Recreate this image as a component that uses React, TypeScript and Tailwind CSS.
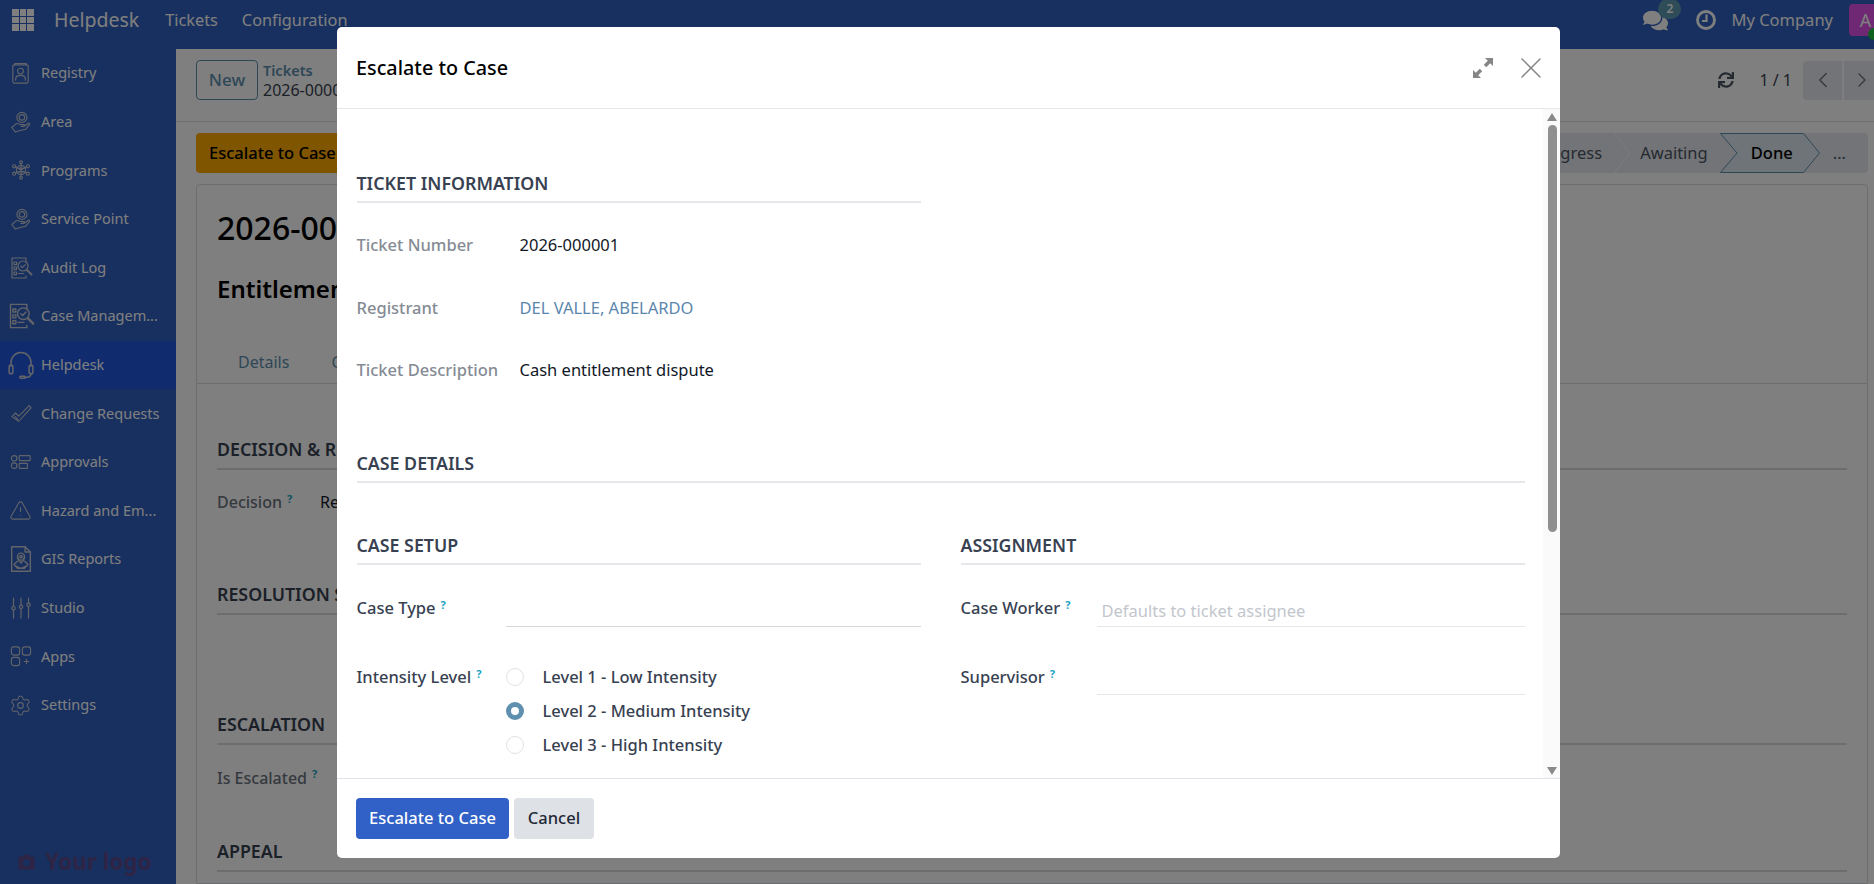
import type { ReactNode } from 'react';
import { ChevronLeft, ChevronRight, Settings, TriangleAlert, X } from 'lucide-react';
import { FaComments, FaSync } from 'react-icons/fa';

const FONT = '"Noto Sans", "Open Sans", sans-serif';

// ─── Sidebar icons ────────────────────────────────────────────────────────────

function Glyph({ size = 22, children }: { size?: number; children: ReactNode }) {
  return (
    <svg
      width={size}
      height={size}
      viewBox="0 0 24 24"
      fill="none"
      stroke="currentColor"
      strokeWidth={1.2}
      strokeLinecap="round"
      strokeLinejoin="round"
    >
      {children}
    </svg>
  );
}

const HandGlobe = (
  <Glyph>
    <circle cx="13" cy="7" r="5.5" />
    <circle cx="13" cy="7" r="3" />
    <path d="M2 18l4-3.5c1-.8 2-1 3-.6l3 1h3c1.2 0 1.2 2 0 2h-3l4-.6 4-3c1-.7 2 .6 1.2 1.5L17 20l-7 1.5-4 1.5z" />
  </Glyph>
);

const CheckList = (
  <>
    <path d="M17 6V2H3v20h14v-2" />
    <rect x="5" y="6" width="2.6" height="2.6" />
    <rect x="5" y="11" width="2.6" height="2.6" />
    <rect x="5" y="16" width="2.6" height="2.6" />
    <path d="M9.5 17.5h5" />
    <circle cx="14" cy="10" r="5" />
    <path d="M11.8 10l1.6 1.6 2.8-3" />
    <path d="M18 14l4.5 4.5" strokeWidth={2} />
  </>
);

const NAV_ITEMS: { label: string; icon: ReactNode; active?: boolean }[] = [
  {
    label: 'Registry',
    icon: (
      <Glyph size={23}>
        <rect x="4" y="3" width="16" height="19" rx="1.5" />
        <path d="M6 3V1.6h12V3" />
        <circle cx="12" cy="9.5" r="3" />
        <path d="M7 19v-1.5c0-2 2-3.5 5-3.5s5 1.500 5 3.500V19" />
      </Glyph>
    ),
  },
  { label: 'Area', icon: HandGlobe },
  {
    label: 'Programs',
    icon: (
      <Glyph>
        <circle cx="12" cy="12" r="5" />
        <path d="M12 5v14M6 8.500l12 7M18 8.500l-12 7M8.500 10h7M8.500 14h7" />
        <circle cx="12" cy="3.500" r="1.500" />
        <circle cx="12" cy="20.500" r="1.500" />
        <circle cx="4.500" cy="8" r="1.700" />
        <circle cx="19.500" cy="8" r="1.700" />
        <circle cx="4.500" cy="16" r="1.700" />
        <circle cx="19.500" cy="16" r="1.700" />
      </Glyph>
    ),
  },
  { label: 'Service Point', icon: HandGlobe },
  { label: 'Audit Log', icon: <Glyph size={24}>{CheckList}</Glyph> },
  { label: 'Case Managem...', icon: <Glyph size={28}>{CheckList}</Glyph> },
  {
    label: 'Helpdesk',
    active: true,
    icon: (
      <Glyph size={30}>
        <path d="M4 13V10a8 8 0 0 1 16 0v3" />
        <rect x="2.500" y="12" width="3" height="7" rx="1.500" />
        <rect x="18.500" y="12" width="3" height="7" rx="1.500" />
        <path d="M20 19c0 2-2 3-5 3" />
        <rect x="11" y="21" width="4.500" height="1.600" rx=".8" />
      </Glyph>
    ),
  },
  {
    label: 'Change Requests',
    icon: (
      <Glyph>
        <path d="M2 16l4-4 3.500 3.500L21 4l2 2.500L9.500 21 2 16z" />
        <path d="M5.500 16l3 3" />
      </Glyph>
    ),
  },
  {
    label: 'Approvals',
    icon: (
      <Glyph>
        <circle cx="4.500" cy="8" r="3" />
        <circle cx="4.500" cy="16" r="3" />
        <rect x="10" y="5" width="12" height="5.500" rx=".8" />
        <rect x="10" y="13.500" width="9" height="5.500" rx=".8" />
      </Glyph>
    ),
  },
  { label: 'Hazard and Em...', icon: <TriangleAlert size={23} strokeWidth={1.1} /> },
  {
    label: 'GIS Reports',
    icon: (
      <Glyph size={28}>
        <path d="M4 1.500h11.500L20 6v16.500H4z" />
        <path d="M15.500 1.500V6H20" />
        <circle cx="12" cy="10" r="3" />
        <circle cx="12" cy="10" r="1" />
        <path d="M12 15.500c-2-2-3-3.500-3-5.500M12 15.500c2-2 3-3.500 3-5.500" />
        <path d="M9 14l-3 2.500 3 3.500h6l3-3.500L15 14M7 18l5 2 5-2" />
      </Glyph>
    ),
  },
  {
    label: 'Studio',
    icon: (
      <Glyph size={24}>
        <path d="M4.500 2v8.500M4.500 14v8M12 2v7M12 12.500V22M19.500 2v5M19.500 10.500V22" />
        <circle cx="4.500" cy="12.200" r="1.700" />
        <circle cx="12" cy="10.800" r="1.700" />
        <circle cx="19.500" cy="8.800" r="1.700" />
      </Glyph>
    ),
  },
  {
    label: 'Apps',
    icon: (
      <Glyph>
        <rect x="1.500" y="2" width="9" height="9" rx="2.500" />
        <rect x="13.500" y="2" width="9" height="9" rx="2.500" />
        <rect x="1.500" y="13.500" width="9" height="9" rx="2.500" />
        <path d="M18 15.500v5M15.500 18h5" />
      </Glyph>
    ),
  },
  { label: 'Settings', icon: <Settings size={23} strokeWidth={1.1} /> },
];

function Sidebar() {
  return (
    <aside className="relative flex h-full w-[176px] shrink-0 flex-col bg-[#3060be]">
      {NAV_ITEMS.map((item) => (
        <div
          key={item.label}
          className={`flex h-[48.6px] items-center text-[14.5px] text-white ${
            item.active ? 'bg-[#2159dc]' : ''
          }`}
        >
          <span className="flex w-[41px] shrink-0 justify-center text-[#c4c8d2]">{item.icon}</span>
          <span className="whitespace-nowrap">{item.label}</span>
        </div>
      ))}
      <div className="mt-auto flex items-center gap-[9px] pb-[11px] pl-[17px] text-[#5c4a8c]">
        <svg width="19" height="19" viewBox="0 0 24 24" fill="currentColor">
          <path d="M2 6h5l2-3h6l2 3h5v16H2zM12 9a4.500 4.500 0 1 0 0 9 4.500 4.500 0 0 0 0-9z" />
        </svg>
        <span className="text-[22.500px] leading-none font-bold">Your logo</span>
      </div>
    </aside>
  );
}

// ─── Page behind the dialog ───────────────────────────────────────────────────

function TopBar() {
  return (
    <header className="flex h-[49px] shrink-0 items-center bg-[#3060be] pb-[9px] text-white">
      <div className="ml-[12px] grid w-[22px] grid-cols-3 gap-[1px]">
        {Array.from({ length: 9 }).map((_, i) => (
          <span key={i} className="h-[6.500px] bg-white" />
        ))}
      </div>
      <span className="ml-[20px] text-[19.500px]">Helpdesk</span>
      <span className="ml-[26px] text-[16.300px]">Tickets</span>
      <span className="ml-[24px] text-[16.300px]">Configuration</span>
      <div className="relative ml-auto flex items-center">
        <span className="relative mr-[28px] -ml-[2px]">
          <FaComments size={25} />
          <span className="absolute -top-[9px] left-[15px] flex h-[20px] w-[23px] items-center justify-center rounded-full bg-[#5c9ab0] text-[12px] font-semibold">
            2
          </span>
        </span>
        <svg width="20" height="20" viewBox="0 0 20 20" fill="none" stroke="currentColor" strokeWidth="2.800">
          <circle cx="10" cy="10" r="8.500" />
          <path d="M10.500 4.500V11H6" strokeWidth="2.200" />
        </svg>
        <span className="mr-[16px] ml-[15px] text-[16.500px]">My Company</span>
        <span className="relative mr-[-8px] flex h-[32px] w-[33px] items-center justify-center rounded-[4px] bg-[#dc50e8] text-[18px]">
          A
          <span className="absolute right-[2px] bottom-[-4px] h-[12px] w-[12px] rounded-full bg-[#22c040]" />
        </span>
      </div>
    </header>
  );
}

function HelpMark() {
  return <sup className="ml-[5px] text-[11px] font-bold text-[#1ca3c4]">?</sup>;
}

function SheetSection({ title, children }: { title: string; children?: ReactNode }) {
  return (
    <div>
      <h3 className="border-b-2 border-[#d8dadd] pb-[7px] text-[17.800px] leading-[24px] font-semibold text-[#374151]">
        {title}
      </h3>
      {children}
    </div>
  );
}

function Statusbar() {
  return (
    <div className="flex h-[40px] items-center rounded-[4px] bg-[#e6e9ee] pr-[22px] text-[16.500px] text-[#4b5563]">
      <span className="mr-[12px]">In Progress</span>
      <svg width="16" height="40" viewBox="0 0 16 40" className="mr-[10px]">
        <path d="M0 0l16 20L0 40" fill="none" stroke="#fff" strokeOpacity=".7" />
      </svg>
      <span className="mr-[12px]">Awaiting</span>
      <span className="relative flex h-[40px] w-[100px] items-center justify-center font-medium text-black">
        <svg width="100" height="40" viewBox="0 0 100 40" className="absolute inset-0">
          <path d="M.5.500h83l16 19.500-16 19.500H.5L17 20z" fill="#dfe9f0" stroke="#5b8fae" />
        </svg>
        <span className="relative pl-[4px]">Done</span>
      </span>
      <span className="ml-[13px]">...</span>
    </div>
  );
}

function BackgroundPage() {
  return (
    <main className="flex h-full min-w-0 flex-1 flex-col bg-white">
      <div className="flex h-[73px] shrink-0 items-center border-b border-[#dcdee1] pb-[10px] pl-[20px]">
        <button
          type="button"
          className="h-[40px] w-[62px] rounded-[4px] border border-[#5b8fae] text-[17px] font-medium text-[#5b8fae]"
        >
          New
        </button>
        <div className="ml-[5px] text-[16px] leading-[20px]">
          <div className="text-[14.500px] font-semibold text-[#5b8fae]">Tickets</div>
          <div className="text-[#374151]">2026-000001</div>
        </div>
        <div className="ml-auto flex items-center text-[#374151]">
          <FaSync size={16} className="text-[#4b5563]" />
          <span className="ml-[25px] text-[16px]">1 / 1</span>
          <span className="ml-[11px] flex h-[39px] w-[39px] items-center justify-center rounded-l-[4px] bg-[#e6e9ee] text-[#6b6f75]">
            <ChevronLeft size={26} strokeWidth={1.3} />
          </span>
          <span className="ml-[2px] flex h-[39px] w-[30px] items-center justify-center bg-[#e6e9ee] pl-[6px] text-[#6b6f75]">
            <ChevronRight size={26} strokeWidth={1.3} />
          </span>
        </div>
      </div>

      <div className="flex items-center justify-between pt-[11px] pr-[6px] pl-[20px]">
        <button
          type="button"
          className="h-[40px] rounded-[4px] bg-[#ffaa00] px-[13px] text-[16.500px] font-medium text-black"
        >
          Escalate to Case
        </button>
        <Statusbar />
      </div>

      <div className="mt-[11px] mr-[6px] ml-[20px] flex-1 rounded-t-[4px] border border-[#d8dadd]">
        <div className="px-[20px]">
          <h1 className="mt-[19px] text-[32px] leading-[48px] font-medium text-black">2026-000001</h1>
          <h2 className="mt-[19px] text-[24px] leading-[36px] font-semibold text-black">Entitlement Dispute</h2>
        </div>
        <div className="mt-[34px] flex h-[43px] items-center gap-[42px] border-b border-[#d8dadd] pl-[41px] text-[16px] text-[#5b8fae]">
          <span>Details</span>
          <span>Communication</span>
        </div>
        <div className="pr-[20px] pl-[20px]">
          <div className="mt-[53px]">
            <SheetSection title="DECISION & RESOLUTION" />
          </div>
          <div className="mt-[20px] flex text-[16px] leading-[24px]">
            <span className="w-[103px] font-medium text-[#6b7280]">
              Decision
              <HelpMark />
            </span>
            <span className="text-[#111827]">Resolved</span>
          </div>
          <div className="mt-[68px]">
            <SheetSection title="RESOLUTION SUMMARY" />
          </div>
          <div className="mt-[96.500px]">
            <SheetSection title="ESCALATION" />
          </div>
          <div className="mt-[21px] text-[16px] leading-[24px] font-medium text-[#6b7280]">
            Is Escalated
            <HelpMark />
          </div>
          <div className="mt-[49px]">
            <SheetSection title="APPEAL" />
          </div>
        </div>
      </div>
    </main>
  );
}

// ─── Dialog ───────────────────────────────────────────────────────────────────

function DialogHeading({ title }: { title: string }) {
  return (
    <h4 className="border-b-2 border-[#e5e7eb] pb-[6px] text-[17.800px] leading-[24px] font-semibold text-[#374151]">
      {title}
    </h4>
  );
}

function ReadonlyRow({ label, children }: { label: string; children: ReactNode }) {
  return (
    <div className="flex text-[16.500px] leading-[24px]">
      <span className="w-[163px] shrink-0 font-medium whitespace-nowrap text-[#858b94]">{label}</span>
      {children}
    </div>
  );
}

function FieldLabel({ label }: { label: string }) {
  return (
    <span className="text-[16.500px] leading-[24px] font-medium text-[#374151]">
      {label}
      <HelpMark />
    </span>
  );
}

function Radio({ label, checked }: { label: string; checked?: boolean }) {
  return (
    <div className="flex h-[34px] items-center text-[16.500px] font-medium text-[#374151]">
      <span
        className={`h-[18px] w-[18px] rounded-full ${
          checked ? 'border-[5px] border-[#5f8fae] bg-white' : 'border border-[#e0e2e6] bg-white'
        }`}
      />
      <span className="ml-[19px]">{label}</span>
    </div>
  );
}

function Scrollbar() {
  return (
    <div className="flex w-[17px] shrink-0 flex-col items-center bg-[#fafafa] pl-[1px]">
      <svg width="10" height="8" viewBox="0 0 10 8" className="mt-[4px]">
        <path d="M5 0l5 8H0z" fill="#8a8a8a" />
      </svg>
      <div className="mt-[4px] h-[407px] w-[9px] rounded-full bg-[#8f8f8f]" />
      <svg width="10" height="8" viewBox="0 0 10 8" className="mt-auto mb-[3px]">
        <path d="M5 8l5-8H0z" fill="#8a8a8a" />
      </svg>
    </div>
  );
}

function EscalateDialog() {
  return (
    <div className="absolute top-[27px] left-[337px] flex h-[831px] w-[1223px] flex-col overflow-hidden rounded-[5px] bg-white">
      <div className="flex h-[82px] shrink-0 items-center border-b border-[#e5e7eb] pr-[11px] pl-[19px]">
        <span className="text-[19.800px] font-medium text-black">Escalate to Case</span>
        <svg width="22" height="22" viewBox="0 0 22 22" fill="#858585" className="ml-auto">
          <path d="M13 1h8v8l-2.800-2.800-4 4-2.400-2.400 4-4zM9 21H1v-8l2.800 2.800 4-4 2.400 2.400-4 4z" />
        </svg>
        <X size={36} strokeWidth={1} className="ml-[19px] text-[#858585]" />
      </div>

      <div className="flex min-h-0 flex-1 border-b border-[#e2e3ea]">
        <div className="min-w-0 flex-1 overflow-hidden pr-[18.500px] pl-[19.500px]">
          <div className="grid grid-cols-2 gap-x-[40px] pt-[62px]">
            <DialogHeading title="TICKET INFORMATION" />
          </div>
          <div className="mt-[30px] flex flex-col gap-[38.500px]">
            <ReadonlyRow label="Ticket Number">
              <span className="text-[#111827]">2026-000001</span>
            </ReadonlyRow>
            <ReadonlyRow label="Registrant">
              <span className="text-[#5b87ad]">DEL VALLE, ABELARDO</span>
            </ReadonlyRow>
            <ReadonlyRow label="Ticket Description">
              <span className="text-[#111827]">Cash entitlement dispute</span>
            </ReadonlyRow>
          </div>
          <div className="mt-[69px]">
            <DialogHeading title="CASE DETAILS" />
          </div>
          <div className="mt-[50px] grid grid-cols-2 gap-x-[40px]">
            <div>
              <DialogHeading title="CASE SETUP" />
              <div className="mt-[31px] flex">
                <div className="w-[149px] shrink-0">
                  <FieldLabel label="Case Type" />
                </div>
                <div className="h-[31px] flex-1 border-b border-[#d4d6da]" />
              </div>
              <div className="mt-[38px] flex">
                <div className="w-[149px] shrink-0">
                  <FieldLabel label="Intensity Level" />
                </div>
                <div className="-mt-[5px]">
                  <Radio label="Level 1 - Low Intensity" />
                  <Radio label="Level 2 - Medium Intensity" checked />
                  <Radio label="Level 3 - High Intensity" />
                </div>
              </div>
            </div>
            <div>
              <DialogHeading title="ASSIGNMENT" />
              <div className="mt-[31px] flex">
                <div className="w-[136px] shrink-0">
                  <FieldLabel label="Case Worker" />
                </div>
                <div className="h-[31px] flex-1 border-b border-[#e5e7eb] pt-[3px] pl-[5px] text-[16.500px] leading-[24px] text-[#c2c6cd]">
                  Defaults to ticket assignee
                </div>
              </div>
              <div className="mt-[38px] flex">
                <div className="w-[136px] shrink-0">
                  <FieldLabel label="Supervisor" />
                </div>
                <div className="h-[30px] flex-1 border-b border-[#e5e7eb]" />
              </div>
            </div>
          </div>
        </div>
        <Scrollbar />
      </div>

      <div className="flex h-[79px] shrink-0 items-center gap-[5px] pb-[1px] pl-[19px]">
        <button
          type="button"
          className="h-[41px] w-[153px] rounded-[4px] bg-[#3160c6] text-[16.500px] font-medium text-white"
        >
          Escalate to Case
        </button>
        <button
          type="button"
          className="h-[41px] w-[80px] rounded-[4px] bg-[#dee1e5] text-[16.500px] font-medium text-[#1f2937]"
        >
          Cancel
        </button>
      </div>
    </div>
  );
}

export default function App() {
  return (
    <div className="relative flex h-screen w-full flex-col overflow-hidden" style={{ fontFamily: FONT }}>
      <TopBar />
      <div className="flex min-h-0 flex-1">
        <Sidebar />
        <BackgroundPage />
      </div>
      <div className="absolute inset-0 bg-black/50" />
      <EscalateDialog />
    </div>
  );
}
